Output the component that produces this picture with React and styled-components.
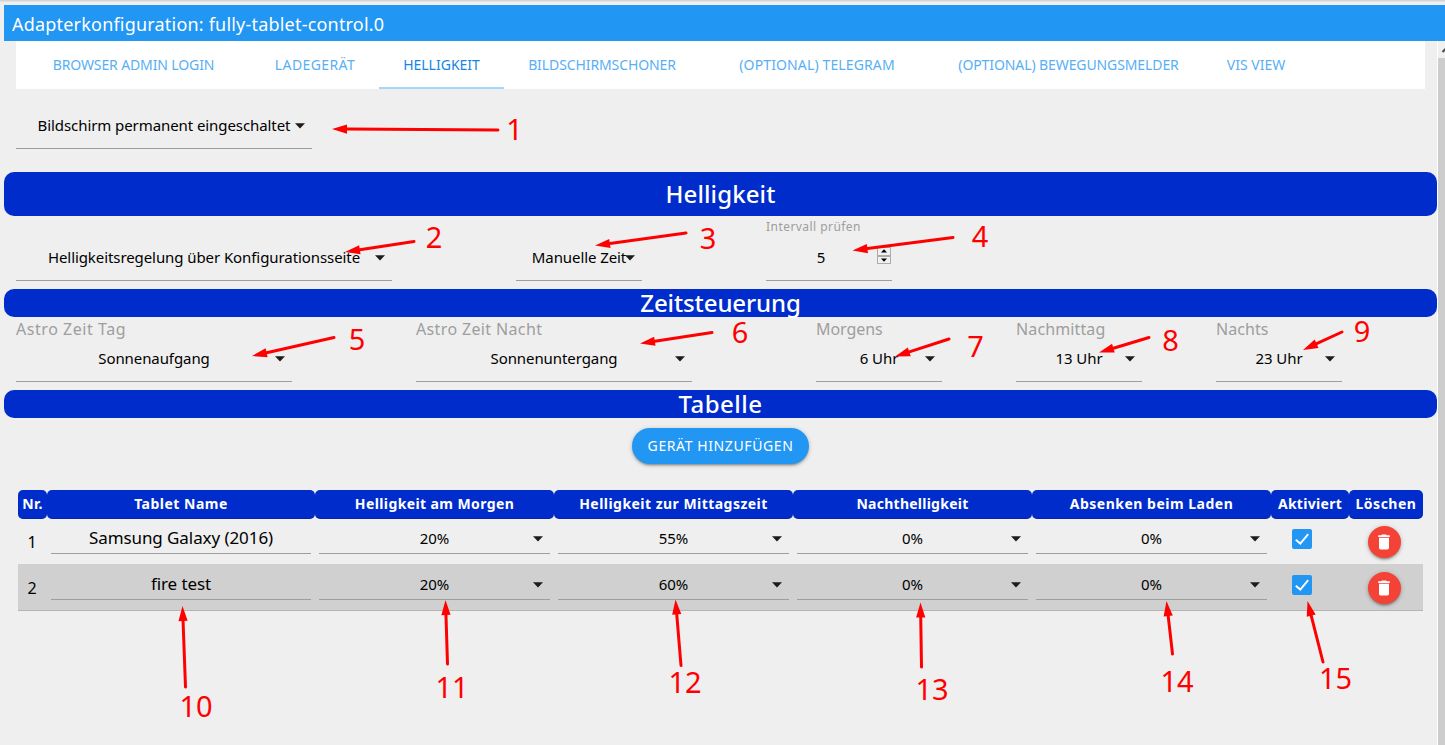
import React from "react";
import styled, { createGlobalStyle } from "styled-components";
import { MdDelete } from "react-icons/md";

const BLUE = "#2196f3";
const NAVY = "#002ccb";
const LINE = "#9e9e9e";

const Global = createGlobalStyle`
  * { box-sizing: border-box; }
  html, body { margin: 0; padding: 0; background: #efefef; overflow: hidden; }
  body { font-family: "Noto Sans", "Open Sans", sans-serif; color: #000; }
`;

const Page = styled.div`
  position: relative;
  display: flex;
  flex-direction: column;
  width: 1445px;
  height: 745px;
  overflow: hidden;
  background: #efefef;
`;

const TopEdge = styled.div`
  height: 5px;
  flex: none;
  background: linear-gradient(#d4d4d4 0 1px, #e2e2e2 1px 2px, #efefef 2px);
`;

const TitleBar = styled.header`
  flex: none;
  height: 36px;
  margin-left: 4px;
  padding: 1px 0 0 8px;
  background: ${BLUE};
  color: #fff;
  font-size: 18px;
  line-height: 36px;
  letter-spacing: 0.2px;
`;

const Body = styled.div`
  flex: 1;
  min-height: 0;
  display: flex;
`;

const Content = styled.main`
  flex: 1;
  padding-left: 4px;
`;

const ScrollBar = styled.div`
  flex: none;
  width: 8px;
  border-left: 1px solid #fff;
  background: #f0f0f0;
  overflow: hidden;
  display: flex;
  flex-direction: column;
`;

const ScrollArrow = styled.svg`
  flex: none;
  width: 17px;
  height: 17px;
`;

const Thumb = styled.div`
  flex: 1;
  background: #cdcdcd;
`;

const Tabs = styled.nav`
  display: flex;
  height: 48px;
  margin: 0 12px;
  background: #fff;
`;

const Tab = styled.a`
  width: ${(p) => p.$w}px;
  height: 48px;
  border-bottom: 2px solid ${(p) => (p.$active ? "#a6d5fa" : "transparent")};
  color: ${(p) => (p.$active ? "#1585e6" : "#58aff5")};
  font-size: 14px;
  line-height: 48px;
  letter-spacing: ${(p) => p.$ls}px;
  text-align: center;
  white-space: nowrap;
`;

const Section = styled.h2`
  height: ${(p) => p.$h}px;
  margin: 0;
  border-radius: 10px;
  background: ${NAVY};
  color: #fff;
  font-size: 24px;
  font-weight: 500;
  line-height: ${(p) => p.$h}px;
  letter-spacing: ${(p) => p.$ls}px;
  text-align: center;
`;

const Fields = styled.div`
  display: flex;
  height: ${(p) => p.$h}px;
  padding: 0 12px ${(p) => p.$bottom}px;
  align-items: flex-end;
`;

const Field = styled.div`
  width: ${(p) => p.$w}px;
  margin-right: ${(p) => p.$gap || 0}px;
`;

const Label = styled.label`
  display: block;
  height: ${(p) => (p.$small ? 17 : 14)}px;
  color: #9e9e9e;
  font-size: ${(p) => (p.$small ? 12 : 16)}px;
  line-height: ${(p) => (p.$small ? 18 : 14)}px;
  letter-spacing: ${(p) => p.$ls || 0}px;
  white-space: nowrap;
`;

const Control = styled.div`
  display: flex;
  position: relative;
  align-items: center;
  justify-content: center;
  height: ${(p) => (p.$dense ? 32 : 46)}px;
  padding-right: ${(p) => p.$shift || 0}px;
  padding-bottom: ${(p) => (p.$dense ? 0 : 2)}px;
  border-bottom: 1px solid ${LINE};
  font-size: ${(p) => (p.$large ? 17 : 15)}px;
  letter-spacing: ${(p) => (p.$dense && !p.$large ? 0 : -0.08)}px;
  white-space: nowrap;
`;

const Caret = styled.svg`
  position: absolute;
  right: 7px;
  top: ${(p) => (p.$dense ? 14 : 20)}px;
  width: 10px;
  height: 6px;
`;

const Spinner = styled.span`
  position: absolute;
  right: 1px;
  top: 12px;
  width: 14px;
  height: 17px;
  display: flex;
  flex-direction: column;
`;

const SpinButton = styled.span`
  flex: 1;
  display: flex;
  align-items: center;
  justify-content: center;
  border: 1px solid #acacac;
  background: #f0f0f0;
`;

const ButtonRow = styled.div`
  display: flex;
  justify-content: center;
  padding: 10px 0 26px;
`;

const AddButton = styled.button`
  width: 177px;
  height: 36px;
  padding: 0;
  border: 0;
  border-radius: 18px;
  background: ${BLUE};
  color: #fff;
  font: 14px/36px "Noto Sans", sans-serif;
  letter-spacing: 0.6px;
  box-shadow: 0 2px 2px rgba(0, 0, 0, 0.16), 0 3px 1px -2px rgba(0, 0, 0, 0.14), 0 1px 5px rgba(0, 0, 0, 0.2);
`;

const Table = styled.div`
  width: 1405px;
  margin-left: 14px;
`;

const Row = styled.div`
  display: grid;
  grid-template-columns: 29px 268px repeat(4, 239px) 78px 74px;
`;

const HeadCell = styled.div`
  height: 29px;
  border-radius: 5px;
  background: ${NAVY};
  box-shadow: inset 0 -1px 0 rgba(0, 0, 0, 0.15);
  color: #fff;
  font-size: 14px;
  font-weight: 700;
  line-height: 28px;
  letter-spacing: ${(p) => p.$ls}px;
  text-align: center;
  white-space: nowrap;
`;

const DataRow = styled(Row)`
  height: ${(p) => (p.$shaded ? 47 : 45)}px;
  padding-top: ${(p) => (p.$shaded ? 4 : 3)}px;
  background: ${(p) => (p.$shaded ? "#d0d0d0" : "transparent")};
  border-bottom: ${(p) => (p.$shaded ? "1px solid #b5b5b5" : "0")};
`;

const Cell = styled.div`
  padding: 0 4px;
`;

const NumberCell = styled.div`
  padding: 9px 1px 0 0;
  font-size: 16px;
  line-height: 22px;
  text-align: center;
`;

const CheckCell = styled.div`
  padding: 7px 0 0 21px;
`;

const CheckBox = styled.span`
  display: block;
  width: 20px;
  height: 20px;
  border-radius: 2px;
  background: ${BLUE};
  svg { display: block; }
`;

const DeleteCell = styled.div`
  padding: 4px 0 0 19px;
`;

const DeleteButton = styled.button`
  display: flex;
  align-items: center;
  justify-content: center;
  width: 33px;
  height: 32px;
  padding: 0 1px 0 0;
  border: 0;
  border-radius: 50%;
  background: #f44336;
  color: #fff;
  box-shadow: 0 2px 2px rgba(0, 0, 0, 0.16), 0 3px 1px -2px rgba(0, 0, 0, 0.14), 0 1px 5px rgba(0, 0, 0, 0.22);
`;

const Notes = styled.svg`
  position: absolute;
  left: 0;
  top: 0;
  width: 1445px;
  height: 745px;
  pointer-events: none;
  text {
    font-size: 29px;
    fill: #f00;
    text-anchor: middle;
  }
`;

const tabs = [
  ["BROWSER ADMIN LOGIN", 235, -0.12],
  ["LADEGERÄT", 128, 0.4],
  ["HELLIGKEIT", 125, 0, true],
  ["BILDSCHIRMSCHONER", 196, -0.1],
  ["(OPTIONAL) TELEGRAM", 234, 0.13],
  ["(OPTIONAL) BEWEGUNGSMELDER", 269, -0.1],
  ["VIS VIEW", 106, 0],
];

const times = [
  ["Astro Zeit Tag", "Sonnenaufgang", 276, 124, 0.55],
  ["Astro Zeit Nacht", "Sonnenuntergang", 276, 124, 0.36],
  ["Morgens", "6 Uhr", 126, 74, -0.05],
  ["Nachmittag", "13 Uhr", 126, 74, 0.12],
  ["Nachts", "23 Uhr", 126, 0, 0.05],
];

const columns = [
  ["Nr.", 0.4],
  ["Tablet Name", 0.5],
  ["Helligkeit am Morgen", 0.4],
  ["Helligkeit zur Mittagszeit", 0.46],
  ["Nachthelligkeit", 0.25],
  ["Absenken beim Laden", 0.5],
  ["Aktiviert", 0.3],
  ["Löschen", 0.5],
];

const devices = [
  ["Samsung Galaxy (2016)", ["20%", "55%", "0%", "0%"]],
  ["fire test", ["20%", "60%", "0%", "0%"]],
];

/* tail x/y, tip x/y, number x/baseline */
const notes = [
  [498, 130, 332, 129, 514.5, 140],
  [414, 241.5, 345, 252, 434, 248],
  [686, 233, 595, 245.5, 708, 249],
  [953, 237.5, 852.5, 250.5, 980, 247],
  [334, 337.5, 252, 356, 357, 350],
  [712, 332.5, 640, 343.5, 740, 343],
  [949, 339, 895, 356.5, 975.5, 357],
  [1149, 337.5, 1099, 352.5, 1170.5, 351],
  [1342, 332, 1303, 350, 1362, 342],
  [185.5, 687, 182.5, 606, 196, 717],
  [447.5, 664, 445.5, 600, 452, 698],
  [681, 665.5, 675.5, 599.5, 685, 693],
  [921.5, 667, 920.5, 602.5, 932, 700],
  [1172.5, 654, 1166.5, 601, 1177, 692],
  [1323, 662, 1307.5, 601, 1335.5, 689],
];

function Select({ children, dense }) {
  return (
    <Control $dense={dense}>
      {children}
      <Caret $dense={dense} viewBox="0 0 10 6">
        <path d="M0 .3h10L5 5.4z" fill="#1c1c1c" />
      </Caret>
    </Control>
  );
}

function Arrow({ from: [x1, y1], to: [x2, y2] }) {
  const len = Math.hypot(x2 - x1, y2 - y1);
  const ux = (x2 - x1) / len;
  const uy = (y2 - y1) / len;
  const bx = x2 - ux * 15;
  const by = y2 - uy * 15;
  const head = [
    [x2, y2],
    [bx - uy * 4.6, by + ux * 4.6],
    [bx + uy * 4.6, by - ux * 4.6],
  ];
  return (
    <g>
      <line x1={x1} y1={y1} x2={bx} y2={by} stroke="#f00" strokeWidth="3" strokeLinecap="round" />
      <polygon points={head.map((p) => p.join(",")).join(" ")} fill="#f00" />
    </g>
  );
}

export default function App() {
  return (
    <Page>
      <Global />
      <TopEdge />
      <TitleBar>Adapterkonfiguration: fully-tablet-control.0</TitleBar>
      <Body>
        <Content>
          <Tabs>
            {tabs.map(([name, w, ls, active]) => (
              <Tab key={name} $w={w} $ls={ls} $active={active}>{name}</Tab>
            ))}
          </Tabs>
          <Fields $h={83} $bottom={23}>
            <Field $w={296}><Select>Bildschirm permanent eingeschaltet</Select></Field>
          </Fields>
          <Section $h={44} $ls={0.1}>Helligkeit</Section>
          <Fields $h={73} $bottom={8}>
            <Field $w={376} $gap={124}><Select>Helligkeitsregelung über Konfigurationsseite</Select></Field>
            <Field $w={126} $gap={124}><Select>Manuelle Zeit</Select></Field>
            <Field $w={126}>
              <Label $small $ls={0.45}>Intervall prüfen</Label>
              <Control $shift={16}>
                5
                <Spinner>
                  <SpinButton><svg width="6" height="4" viewBox="0 0 6 4"><path d="M0 3.5h6L3 .2z" /></svg></SpinButton>
                  <SpinButton><svg width="6" height="4" viewBox="0 0 6 4"><path d="M0 .5h6L3 3.8z" /></svg></SpinButton>
                </Spinner>
              </Control>
            </Field>
          </Fields>
          <Section $h={28} $ls={-0.1}>Zeitsteuerung</Section>
          <Fields $h={73} $bottom={8}>
            {times.map(([label, value, w, gap, ls]) => (
              <Field key={label} $w={w} $gap={gap}>
                <Label $ls={ls}>{label}</Label>
                <Select>{value}</Select>
              </Field>
            ))}
          </Fields>
          <Section $h={28} $ls={0.5}>Tabelle</Section>
          <ButtonRow><AddButton>GERÄT HINZUFÜGEN</AddButton></ButtonRow>
          <Table>
            <Row>
              {columns.map(([name, ls]) => <HeadCell key={name} $ls={ls}>{name}</HeadCell>)}
            </Row>
            {devices.map(([name, levels], i) => (
              <DataRow key={name} $shaded={i % 2 === 1}>
                <NumberCell>{i + 1}</NumberCell>
                <Cell><Control $dense $large>{name}</Control></Cell>
                {levels.map((v, k) => <Cell key={k}><Select dense>{v}</Select></Cell>)}
                <CheckCell>
                  <CheckBox>
                    <svg width="20" height="20" viewBox="0 0 20 20">
                      <path d="M3.8 10.8L8.3 14.6L16.2 5.2" fill="none" stroke="#fff" strokeWidth="1.9" />
                    </svg>
                  </CheckBox>
                </CheckCell>
                <DeleteCell>
                  <DeleteButton><MdDelete size={20} /></DeleteButton>
                </DeleteCell>
              </DataRow>
            ))}
          </Table>
        </Content>
        <ScrollBar>
          <ScrollArrow viewBox="0 0 17 17">
            <path d="M4.5 11L8.5 7L12.5 11" fill="none" stroke="#505050" strokeWidth="2.2" />
          </ScrollArrow>
          <Thumb />
        </ScrollBar>
      </Body>
      <Notes viewBox="0 0 1445 745">
        {notes.map(([x1, y1, x2, y2, tx, ty], i) => (
          <g key={i}>
            <Arrow from={[x1, y1]} to={[x2, y2]} />
            <text x={tx} y={ty}>{i + 1}</text>
          </g>
        ))}
      </Notes>
    </Page>
  );
}
